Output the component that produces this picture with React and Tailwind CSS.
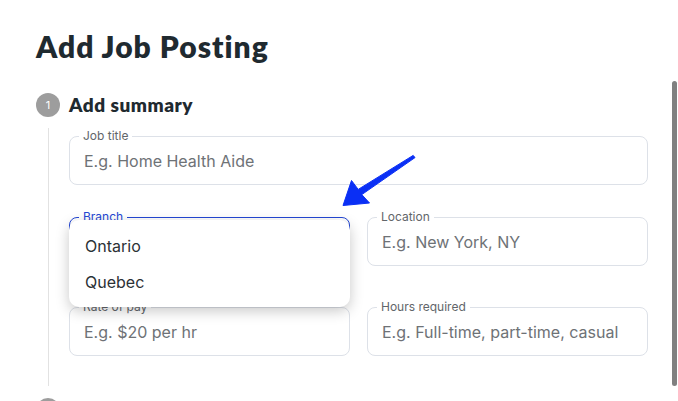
import React from 'react';

function Field({ label, placeholder, focused, children }) {
    return (
        <div className="relative">
            <div
                className={`h-[49px] rounded-lg border flex items-center pl-[14px] ${
                    focused ? 'border-[#2447d4]' : 'border-[#dde1e8]'
                }`}
            >
                <span className="text-[16px] text-[#6e7276]">{placeholder}</span>
            </div>
            <span
                className={`absolute -top-[8px] left-[10px] px-1 bg-white text-[12px] leading-[15px] ${
                    focused ? 'text-[#2447d4]' : 'text-[#62666a]'
                }`}
            >
                {label}
            </span>
            {children}
        </div>
    );
}

export default function App() {
    return (
        <div className="relative w-full h-[401px] overflow-hidden bg-white font-['Inter',sans-serif]">
            <div className="pl-9 pr-[30px]">
                <h1 className="pt-[29px] text-[30px] leading-[34px] font-extrabold text-[#1f2a30] font-['Lato',sans-serif] tracking-[1px]">
                    Add Job Posting
                </h1>

                {/* Step 1 */}
                <div className="flex items-center gap-[9px] mt-[30px]">
                    <div className="w-6 h-6 rounded-full bg-[#9d9d9d] text-white text-[11px] flex items-center justify-center">
                        1
                    </div>
                    <h2 className="text-[19px] leading-6 font-extrabold text-[#1f2a30] font-['Lato',sans-serif] tracking-[0.5px]">
                        Add summary
                    </h2>
                </div>

                <div className="ml-3 mt-[11px] border-l border-[#e2e2e2] pl-5 pt-2 pb-[30px]">
                    <Field label="Job title" placeholder="E.g. Home Health Aide" />

                    <div className="grid grid-cols-2 gap-x-[17px] mt-8">
                        <Field label="Branch" placeholder="" focused>
                            <div className="absolute top-[3px] left-0 right-0 h-[87px] z-10 bg-white rounded-[10px] shadow-[0_4px_14px_rgba(0,0,0,0.22)] flex flex-col pt-[8px]">
                                <div className="h-9 flex items-center pl-[16px] text-[16px] text-[#2b3136]">Ontario</div>
                                <div className="h-9 flex items-center pl-[16px] text-[16px] text-[#2b3136]">Quebec</div>
                            </div>
                        </Field>
                        <Field label="Location" placeholder="E.g. New York, NY" />
                    </div>

                    <div className="grid grid-cols-2 gap-x-[17px] mt-[41px]">
                        <Field label="Rate of pay" placeholder="E.g. $20 per hr" />
                        <Field label="Hours required" placeholder="E.g. Full-time, part-time, casual" />
                    </div>
                </div>

                {/* Step 2 */}
                <div className="flex items-center gap-[9px] mt-3">
                    <div className="w-6 h-6 rounded-full bg-[#9d9d9d] text-white text-[11px] flex items-center justify-center">
                        2
                    </div>
                    <h2 className="text-[19px] leading-6 font-extrabold text-[#1f2a30] font-['Lato',sans-serif] tracking-[0.5px]">
                        Add details
                    </h2>
                </div>
            </div>

            {/* annotation arrow */}
            <svg className="absolute left-0 top-0 pointer-events-none" width="678" height="401" viewBox="0 0 678 401">
                <path
                    d="M343 205.5 L351.5 180.5 L358.2 189.4 L413.2 155.4 L415 157.6 L361.8 194.6 L369.5 203 Z"
                    fill="#0a2ff5"
                    stroke="#0a2ff5"
                    strokeWidth="1"
                    strokeLinejoin="round"
                />
            </svg>

            {/* scrollbar thumb */}
            <div className="absolute right-[1px] top-[81px] w-[5px] h-[305px] rounded-full bg-[#808080]" />
        </div>
    );
}
